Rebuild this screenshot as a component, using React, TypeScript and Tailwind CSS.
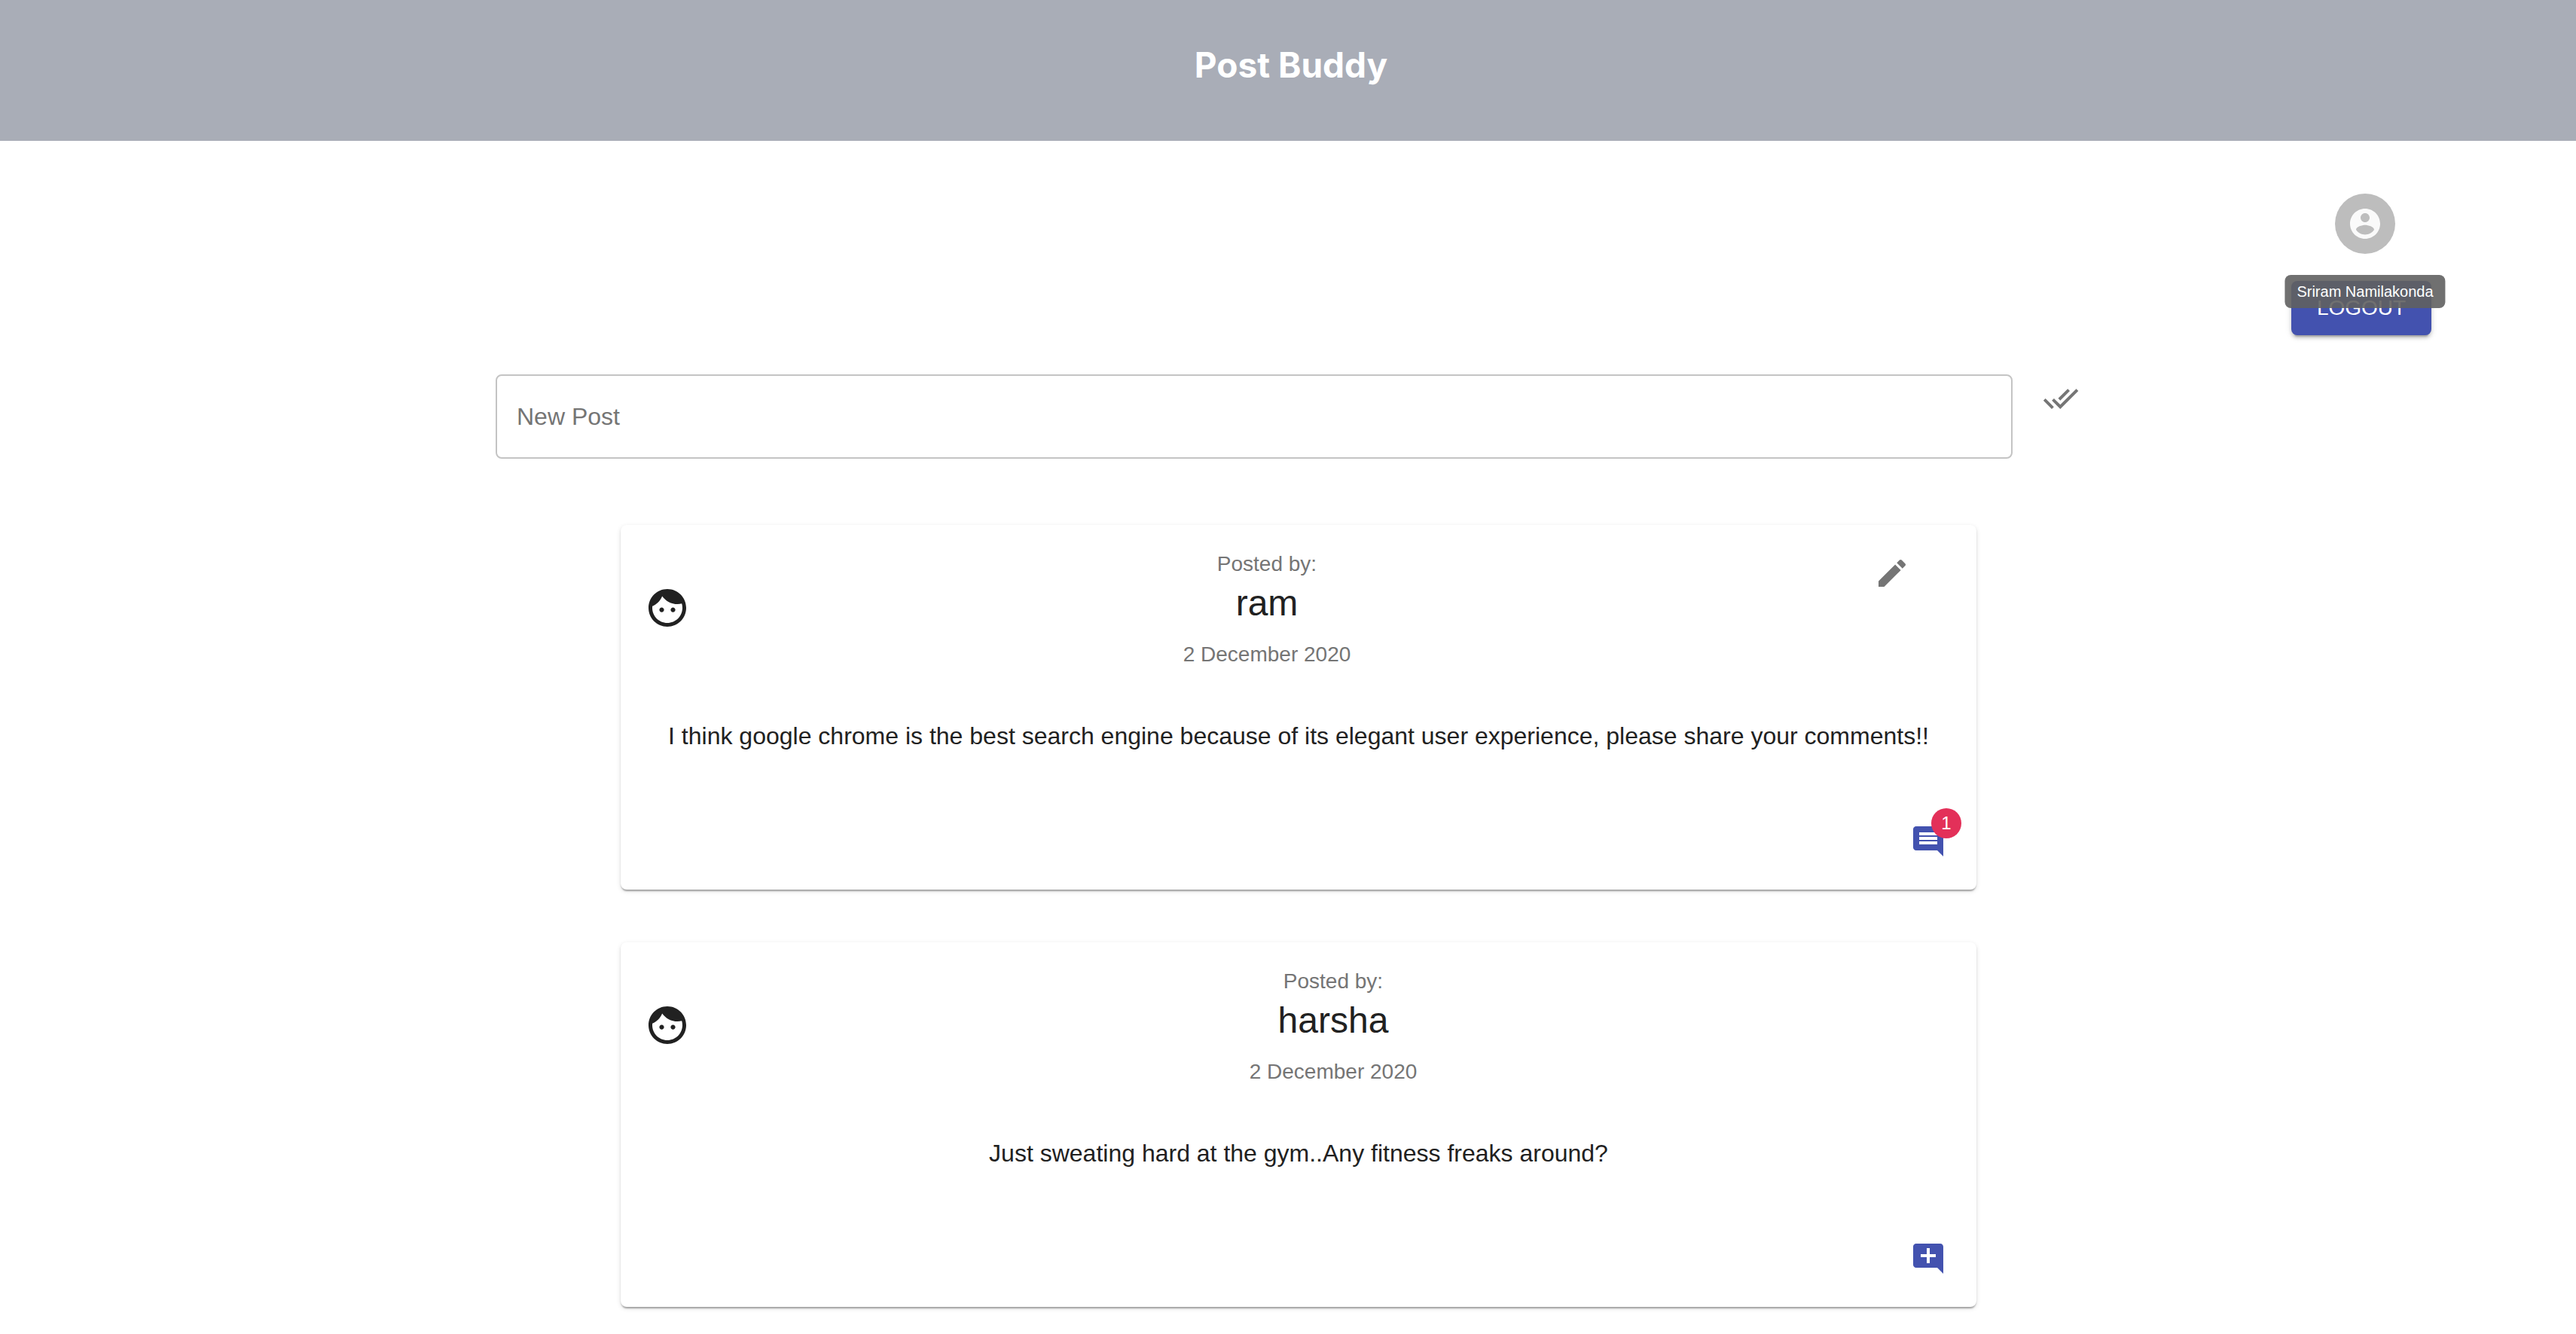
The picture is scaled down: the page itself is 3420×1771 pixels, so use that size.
import React from 'react';

type IconProps = { className?: string; d: string };

function Icon({ className, d }: IconProps) {
  return (
    <svg viewBox="0 0 24 24" fill="currentColor" aria-hidden="true" className={className}>
      <path d={d} />
    </svg>
  );
}

const FACE =
  'M9 11.75c-.69 0-1.25.56-1.25 1.25s.56 1.25 1.25 1.25 1.25-.56 1.25-1.25-.56-1.25-1.25-1.25zm6 0c-.69 0-1.25.56-1.25 1.25s.56 1.25 1.25 1.25 1.25-.56 1.25-1.25-.56-1.25-1.25-1.25zM12 2C6.48 2 2 6.48 2 12s4.48 10 10 10 10-4.48 10-10S17.52 2 12 2zm0 18c-4.41 0-8-3.59-8-8 0-.29.02-.58.05-.86 2.36-1.05 4.23-2.98 5.21-5.37C11.07 8.33 14.05 10 17.42 10c.78 0 1.53-.09 2.25-.26.21.71.33 1.47.33 2.26 0 4.41-3.59 8-8 8z';
const ACCOUNT =
  'M12 2C6.48 2 2 6.48 2 12s4.48 10 10 10 10-4.48 10-10S17.52 2 12 2zm0 3c1.66 0 3 1.34 3 3s-1.34 3-3 3-3-1.34-3-3 1.34-3 3-3zm0 14.2c-2.5 0-4.71-1.28-6-3.22.03-1.99 4-3.08 6-3.08 1.99 0 5.97 1.09 6 3.08-1.29 1.94-3.5 3.22-6 3.22z';
const DONE_ALL =
  'M18 7l-1.41-1.41-6.34 6.34 1.41 1.41L18 7zm4.24-1.41L11.66 16.17 7.48 12l-1.41 1.41L11.66 19l12-12-1.42-1.41zM.41 13.41L6 19l1.41-1.41L1.83 12 .41 13.41z';
const EDIT =
  'M3 17.25V21h3.75L17.81 9.94l-3.75-3.75L3 17.25zM20.71 7.04c.39-.39.39-1.02 0-1.41l-2.34-2.34c-.39-.39-1.02-.39-1.41 0l-1.83 1.83 3.75 3.75 1.83-1.83z';
const COMMENT =
  'M21.99 4c0-1.1-.89-2-1.99-2H4c-1.1 0-2 .9-2 2v12c0 1.1.9 2 2 2h14l4 4-.01-18zM18 14H6v-2h12v2zm0-3H6V9h12v2zm0-3H6V6h12v2z';
const ADD_COMMENT =
  'M21.99 4c0-1.1-.89-2-1.99-2H4c-1.1 0-2 .9-2 2v12c0 1.1.9 2 2 2h14l4 4-.01-18zM17 11h-4v4h-2v-4H7V9h4V5h2v4h4v2z';

type Post = { author: string; date: string; text: string; comments: number; editable: boolean };

const posts: Post[] = [
  {
    author: 'ram',
    date: '2 December 2020',
    text: 'I think google chrome is the best search engine because of its elegant user experience, please share your comments!!',
    comments: 1,
    editable: true,
  },
  {
    author: 'harsha',
    date: '2 December 2020',
    text: 'Just sweating hard at the gym..Any fitness freaks around?',
    comments: 0,
    editable: false,
  },
];

function PostCard({ post }: { post: Post }) {
  return (
    <article className="w-full rounded-lg bg-white text-[#212121] shadow-[0_4px_2px_-2px_rgba(0,0,0,0.2),0_2px_2px_0_rgba(0,0,0,0.14),0_2px_6px_0_rgba(0,0,0,0.12)]">
      <header className="flex items-center p-8">
        <Icon d={FACE} className="mr-8 size-[60px] shrink-0" />
        <div className="-mb-1 flex-1 text-center">
          <p className="text-[28px] leading-10 text-[#757575]">Posted by:</p>
          <h2 className="text-5xl leading-16">{post.author}</h2>
          <p className="mt-4 text-[28px] leading-10 text-[#757575]">{post.date}</p>
        </div>
        {post.editable && (
          <div className="-mt-4 -mr-4 flex w-48 justify-center self-start">
            <button type="button" aria-label="Edit post" className="rounded-full p-6 text-[#757575]">
              <Icon d={EDIT} className="size-12" />
            </button>
          </div>
        )}
      </header>
      <p className="px-8 pt-9 pb-[52px] text-center text-[32px] leading-12">{post.text}</p>
      <footer className="flex justify-end p-4">
        <button
          type="button"
          aria-label={post.comments > 0 ? 'Show comments' : 'Add comment'}
          className="rounded-full p-6 text-[#4352af]"
        >
          <span className="relative block">
            <Icon d={post.comments > 0 ? COMMENT : ADD_COMMENT} className="size-12" />
            {post.comments > 0 && (
              <span className="absolute -top-5 -right-5 flex size-10 items-center justify-center rounded-full bg-[#e33059] text-2xl leading-none text-white">
                {post.comments}
              </span>
            )}
          </span>
        </button>
      </footer>
    </article>
  );
}

export default function App() {
  return (
    <div className="min-h-screen bg-white font-['Liberation_Sans',Arial,sans-serif]">
      <header className="bg-[#a9adb7] pt-14 pb-[71px] pr-1 pl-3 text-center">
        <h1 className="font-['Inter',sans-serif] text-[46px] leading-[60px] font-bold text-white">Post Buddy</h1>
      </header>

      <div className="flex justify-end pt-[70px] pr-48">
        <div className="flex flex-col items-center">
          <div className="relative ml-2.5">
            <button
              type="button"
              aria-label="Account"
              aria-describedby="account-name"
              className="flex size-20 items-center justify-center rounded-full bg-[#bdbdbd] text-[#fafafa]"
            >
              <Icon d={ACCOUNT} className="size-12" />
            </button>
            <div
              id="account-name"
              role="tooltip"
              className="absolute top-full left-1/2 z-10 mt-7 -translate-x-1/2 rounded-lg bg-[#616161]/90 px-4 py-2 text-xl leading-7 whitespace-nowrap text-white"
            >
              Sriram Namilakonda
            </div>
          </div>
          <button
            type="button"
            className="mt-9 h-[72px] w-[186px] rounded-lg bg-[#4352af] text-[28px] leading-12 text-white uppercase shadow-[0_6px_2px_-4px_rgba(0,0,0,0.2),0_4px_4px_0_rgba(0,0,0,0.14),0_2px_10px_0_rgba(0,0,0,0.12)]"
          >
            Logout
          </button>
        </div>
      </div>

      <main className="flex flex-col items-center pt-9 pl-7">
        <form className="flex w-full max-w-[2132px] items-start gap-4 pr-1.5" onSubmit={(e) => e.preventDefault()}>
          <input
            type="text"
            aria-label="New Post"
            placeholder="New Post"
            className="mt-4 h-28 min-w-0 flex-1 rounded-lg border-2 border-[#c4c4c4] px-[26px] text-[32px] text-[#212121] outline-none placeholder:text-[#757575]"
          />
          <button type="submit" aria-label="Submit post" className="rounded-full p-6 text-[#757575]">
            <Icon d={DONE_ALL} className="size-12" />
          </button>
        </form>

        <section aria-label="Posts" className="mt-22 flex w-full max-w-[1800px] flex-col gap-[70px] pb-9">
          {posts.map((post) => (
            <PostCard key={post.author} post={post} />
          ))}
        </section>
      </main>
    </div>
  );
}
